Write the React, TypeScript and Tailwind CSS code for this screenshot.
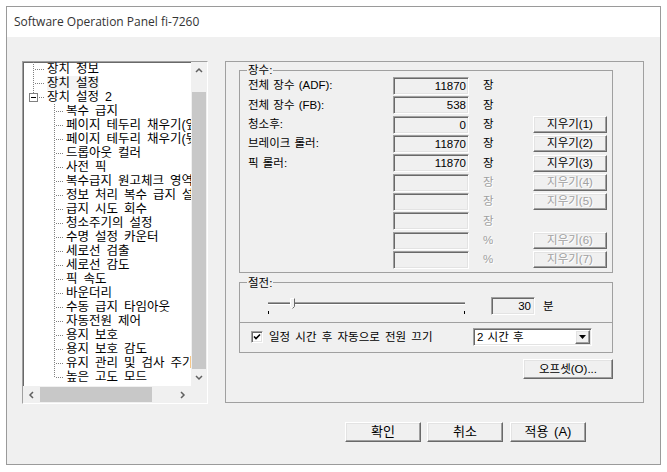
import React from 'react';

const FONT = 'font-[family-name:Liberation_Sans,Noto_Sans_CJK_KR,sans-serif]';

const raised =
  'bg-[#f0f0f0] border border-t-white border-l-white border-b-[#696969] border-r-[#696969] shadow-[inset_-1px_-1px_0_#a0a0a0,inset_1px_1px_0_#e3e3e3]';
const sunken =
  'border border-t-[#a0a0a0] border-l-[#a0a0a0] border-b-white border-r-white shadow-[inset_1px_1px_0_#696969,inset_-1px_-1px_0_#e3e3e3]';
const disabledText = 'text-[#a0a0a0] [text-shadow:1px_1px_0_#fff]';

type TreeKind = 'root' | 'parent' | 'child' | 'last';

const TREE: { t: string; k: TreeKind }[] = [
  { t: '장치 정보', k: 'root' },
  { t: '장치 설정', k: 'root' },
  { t: '장치 설정 2', k: 'parent' },
  { t: '복수 급지', k: 'child' },
  { t: '페이지 테두리 채우기(앞면)', k: 'child' },
  { t: '페이지 테두리 채우기(뒷면)', k: 'child' },
  { t: '드롭아웃 컬러', k: 'child' },
  { t: '사전 픽', k: 'child' },
  { t: '복수급지 원고체크 영역', k: 'child' },
  { t: '정보 처리 복수 급지 설정', k: 'child' },
  { t: '급지 시도 회수', k: 'child' },
  { t: '청소주기의 설정', k: 'child' },
  { t: '수명 설정 카운터', k: 'child' },
  { t: '세로선 검출', k: 'child' },
  { t: '세로선 감도', k: 'child' },
  { t: '픽 속도', k: 'child' },
  { t: '바운더리', k: 'child' },
  { t: '수동 급지 타임아웃', k: 'child' },
  { t: '자동전원 제어', k: 'child' },
  { t: '용지 보호', k: 'child' },
  { t: '용지 보호 감도', k: 'child' },
  { t: '유지 관리 및 검사 주기', k: 'child' },
  { t: '높은 고도 모드', k: 'last' },
];

const COUNTS = [
  { label: '전체 장수 (ADF):', value: '11870', unit: '장' },
  { label: '전체 장수 (FB):', value: '538', unit: '장' },
  { label: '청소후:', value: '0', unit: '장', btn: '지우기(1)' },
  { label: '브레이크 롤러:', value: '11870', unit: '장', btn: '지우기(2)' },
  { label: '픽 롤러:', value: '11870', unit: '장', btn: '지우기(3)' },
  { unit: '장', btn: '지우기(4)', off: true },
  { unit: '장', btn: '지우기(5)', off: true },
  { unit: '장', off: true },
  { unit: '%', btn: '지우기(6)', off: true },
  { unit: '%', btn: '지우기(7)', off: true },
];

function TreeLines({ kind }: { kind: TreeKind }) {
  const dot = { stroke: '#808080', strokeDasharray: '1 1', strokeWidth: 1 };
  if (kind === 'root') {
    return (
      <svg width="23" height="14" className="shrink-0">
        <line x1="10.5" y1="0" x2="10.5" y2="14" {...dot} />
        <line x1="12" y1="7.5" x2="22" y2="7.5" {...dot} />
      </svg>
    );
  }
  if (kind === 'parent') {
    return (
      <svg width="23" height="14" className="shrink-0">
        <line x1="10.5" y1="0" x2="10.5" y2="3" {...dot} />
        <rect x="6.5" y="3.5" width="8" height="8" fill="#fff" stroke="#808080" />
        <line x1="8" y1="7.5" x2="13" y2="7.5" stroke="#000" />
        <line x1="16" y1="7.5" x2="22" y2="7.5" {...dot} />
      </svg>
    );
  }
  return (
    <svg width="42" height="14" className="shrink-0">
      <line x1="31.5" y1="0" x2="31.5" y2={kind === 'last' ? 8 : 14} {...dot} />
      <line x1="33" y1="7.5" x2="41" y2="7.5" {...dot} />
    </svg>
  );
}

function Chevron({ dir }: { dir: 'up' | 'down' | 'left' | 'right' }) {
  const pts = {
    up: '1,5 4,2 7,5',
    down: '1,2 4,5 7,2',
    left: '5,1 2,4 5,7',
    right: '2,1 5,4 2,7',
  }[dir];
  return (
    <svg width="8" height="8">
      <polyline points={pts} fill="none" stroke="#606060" strokeWidth="1.5" />
    </svg>
  );
}

function Tree() {
  return (
    <div className="w-[186px] h-[343px] bg-white border border-t-[#a0a0a0] border-l-[#a0a0a0] border-b-white border-r-white shadow-[inset_1px_1px_0_#696969] flex flex-col">
      <div className="flex flex-1 min-h-0">
        <div className="w-[168px] overflow-hidden text-[12.5px] leading-[14px] text-black [word-spacing:2.5px]">
          {TREE.map((item, i) => (
            <div key={i} className="h-[14px] flex items-center whitespace-nowrap">
              <TreeLines kind={item.k} />
              <span className={`ml-[1px] ${i === 1 ? 'bg-[#f4f4f4]' : ''}`}>{item.t}</span>
            </div>
          ))}
        </div>
        <div className="w-[16px] bg-[#f0f0f0] flex flex-col">
          <div className="h-[17px] flex items-center justify-center">
            <Chevron dir="up" />
          </div>
          <div className="flex-1 flex flex-col pt-[13px]">
            <div className="flex-1 mx-[1px] bg-[#c8c8c8]" />
          </div>
          <div className="h-[17px] flex items-center justify-center">
            <Chevron dir="down" />
          </div>
        </div>
      </div>
      <div className="h-[17px] flex bg-[#f0f0f0]">
        <div className="w-[17px] flex items-center justify-center">
          <Chevron dir="left" />
        </div>
        <div className="w-[134px] flex items-center">
          <div className="w-[112px] h-[15px] bg-[#c8c8c8]" />
        </div>
        <div className="w-[17px] flex items-center justify-center">
          <Chevron dir="right" />
        </div>
        <div className="flex-1 bg-[#f0f0f0]" />
      </div>
    </div>
  );
}

function CountGroup() {
  return (
    <fieldset className="ml-[13px] mt-[2px] w-[374px] border border-[#a0a0a0] pb-[3px]">
      <legend className="ml-[7px] px-[1px] text-[11.5px] leading-[12px]">장수:</legend>
      <div className="flex flex-col gap-[1.33px] pt-[1px]">
        {COUNTS.map((r, i) => (
          <div key={i} className="h-[18px] flex items-center text-[11.5px]">
            <div className="w-[153px] pl-[8px] whitespace-nowrap [word-spacing:1px]">{r.label ?? ''}</div>
            <div className={`w-[76px] h-[18px] ${sunken} bg-[#f0f0f0] flex items-center justify-end pr-[2px] leading-[14px]`}>
              {r.value ?? ''}
            </div>
            <div className={`w-[64px] pl-[14px] ${r.off ? disabledText : ''}`}>{r.unit}</div>
            {r.btn && (
              <div className={`w-[74px] h-[17px] ${raised} flex items-center justify-center leading-[13px] ${r.off ? disabledText : ''}`}>
                {r.btn}
              </div>
            )}
          </div>
        ))}
      </div>
    </fieldset>
  );
}

function PowerGroup() {
  return (
    <fieldset className="ml-[13px] mt-[4px] w-[374px] border border-[#a0a0a0]">
      <legend className="ml-[7px] px-[1px] text-[11.5px] leading-[12px]">절전:</legend>
      <div className="flex h-[33px] text-[11.5px]">
        <svg width="204" height="20" className="ml-[25px] mt-[8px] shrink-0">
          <line x1="3" y1="5.5" x2="200" y2="5.5" stroke="#a0a0a0" />
          <line x1="3" y1="6.5" x2="200" y2="6.5" stroke="#696969" />
          <line x1="3" y1="7.5" x2="200" y2="7.5" stroke="#ffffff" />
          <path d="M25.5 1.5 H29.5 V9.5 L27.5 11.5 L25.5 9.5 Z" fill="#f0f0f0" stroke="#ffffff" />
          <path d="M29.5 1.5 V9.5 L27.5 11.5" fill="none" stroke="#696969" />
          <line x1="3.5" y1="14" x2="3.5" y2="17" stroke="#000" />
          <line x1="199.5" y1="14" x2="199.5" y2="17" stroke="#000" />
        </svg>
        <div className={`ml-[22px] mt-[8px] w-[44px] h-[18px] ${sunken} bg-[#f0f0f0] flex items-center justify-end pr-[3px] leading-[14px]`}>
          30
        </div>
        <div className="ml-[8px] mt-[8px] leading-[18px]">분</div>
      </div>
      <div className="border-t border-[#a0a0a0] h-[30px] flex items-center text-[11.5px]">
        <div className="w-[233px] flex items-center">
          <div className={`ml-[11px] w-[12px] h-[12px] bg-white ${sunken} flex items-center justify-center`}>
            <svg width="8" height="8">
              <polyline points="1,3.5 3,5.5 7,1.5" fill="none" stroke="#000" strokeWidth="1.6" />
            </svg>
          </div>
          <span className="ml-[6px] whitespace-nowrap [word-spacing:2px]">일정 시간 후 자동으로 전원 끄기</span>
        </div>
        <div className={`w-[119px] h-[18px] bg-white ${sunken} flex items-center`}>
          <span className="flex-1 pl-[3px] leading-[14px] [word-spacing:1px]">2 시간 후</span>
          <div className={`w-[15px] h-[14px] mr-[1px] ${raised} flex items-center justify-center`}>
            <svg width="7" height="4">
              <polygon points="0,0 7,0 3.5,4" fill="#000" />
            </svg>
          </div>
        </div>
      </div>
    </fieldset>
  );
}

export default function App() {
  return (
    <div className={`min-h-screen bg-white p-[6px] ${FONT} text-black`}>
      <div className="w-[655px] h-[459px] border border-[#9a9a9a] flex flex-col">
        <div className="h-[30px] bg-white flex items-center px-[7px] text-[12px] text-[#333] font-[family-name:Open_Sans,sans-serif]">
          Software Operation Panel fi-7260
        </div>
        <div className="flex-1 bg-[#f0f0f0] pl-[15px] pt-[24px]">
          <div className="flex items-start">
            <Tree />
            <div className="ml-[17px] w-[419px] h-[342px] border border-[#a0a0a0] flex flex-col">
              <CountGroup />
              <PowerGroup />
              <div className="w-[374px] ml-[13px] mt-[6px] flex justify-end">
                <div className={`w-[90px] h-[20px] ${raised} flex items-center justify-center text-[11.5px] leading-[14px]`}>
                  오프셋(O)...
                </div>
              </div>
            </div>
          </div>
          <div className="flex mt-[18px] ml-[323px] text-[13px]">
            <div className={`w-[76px] h-[20px] ${raised} flex items-center justify-center leading-[14px]`}>확인</div>
            <div className={`ml-[6px] w-[76px] h-[20px] ${raised} flex items-center justify-center leading-[14px] [word-spacing:3px]`}>취소</div>
            <div className={`ml-[7px] w-[76px] h-[20px] ${raised} flex items-center justify-center leading-[14px] [word-spacing:2px]`}>
              적용 (A)
            </div>
          </div>
        </div>
      </div>
    </div>
  );
}
